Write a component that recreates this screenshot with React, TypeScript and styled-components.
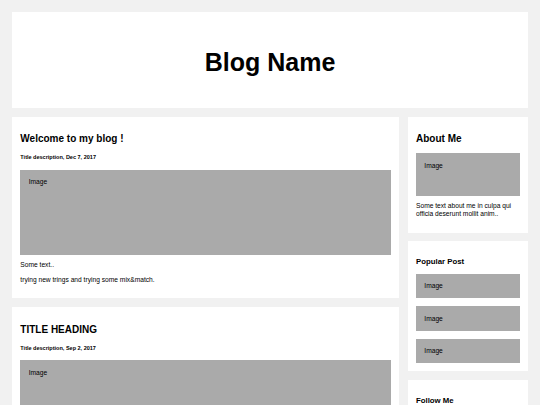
import React from "react";
import styled, { createGlobalStyle } from "styled-components";

const GlobalStyle = createGlobalStyle`
  * { box-sizing: border-box; }
  html, body { margin: 0; overflow: hidden; }
  body {
    padding: 12px;
    background: #f1f1f1;
    font-family: "Liberation Sans", Arial, sans-serif;
    font-size: 6.667px;
    color: #000;
  }
`;

const Header = styled.header`
  background: #fff;
  height: 96px;
  padding-top: 36px;
  text-align: center;
`;

const BlogTitle = styled.h1`
  margin: 0;
  font-size: 25px;
  line-height: 28.75px;
  font-weight: bold;
`;

const Row = styled.div`
  display: flex;
  align-items: flex-start;
`;

const LeftColumn = styled.main`
  flex: 0 0 75%;
  width: 75%;
`;

const RightColumn = styled.aside`
  flex: 0 0 25%;
  width: 25%;
  padding-left: 8.67px;
`;

const Card = styled.section`
  background: #fff;
  padding: 8.33px;
  margin-top: 8.67px;
  display: flow-root;
`;

const PostTitle = styled.h2`
  font-size: 10px;
  line-height: 11.5px;
  font-weight: bold;
  margin: 8.5px 0 8.3px;
`;

const PostMeta = styled.h5`
  font-size: 5.53px;
  line-height: 6.36px;
  font-weight: bold;
  margin: 9.24px 0;
`;

const SideTitle = styled.h3`
  font-size: 7.8px;
  line-height: 9px;
  font-weight: bold;
  margin: 7.8px 0;
`;

const FakeImg = styled.div<{ $height?: number }>`
  background: #aaa;
  width: 100%;
  padding: 8.33px;
  line-height: 7.67px;
  ${(p) => (p.$height ? `height: ${p.$height}px;` : "")}
`;

const ImageStack = styled.div`
  display: flex;
  flex-direction: column;
  gap: 8px;
`;

const Text = styled.p`
  margin: 6.67px 0;
  line-height: 7.67px;
`;

type Post = { title: string; meta: string };

const posts: Post[] = [
  { title: "Welcome to my blog !", meta: "Title description, Dec 7, 2017" },
  { title: "TITLE HEADING", meta: "Title description, Sep 2, 2017" },
];

export default function App() {
  return (
    <>
      <GlobalStyle />
      <Header>
        <BlogTitle>Blog Name</BlogTitle>
      </Header>
      <Row>
        <LeftColumn>
          {posts.map((post) => (
            <Card key={post.title}>
              <PostTitle>{post.title}</PostTitle>
              <PostMeta>{post.meta}</PostMeta>
              <FakeImg $height={85}>Image</FakeImg>
              <Text>Some text..</Text>
              <Text>trying new trings and trying some mix&amp;match.</Text>
            </Card>
          ))}
        </LeftColumn>
        <RightColumn>
          <Card>
            <PostTitle>About Me</PostTitle>
            <FakeImg $height={42.3}>Image</FakeImg>
            <Text>Some text about me in culpa qui officia deserunt mollit anim..</Text>
          </Card>
          <Card>
            <SideTitle>Popular Post</SideTitle>
            <ImageStack>
              <FakeImg>Image</FakeImg>
              <FakeImg>Image</FakeImg>
              <FakeImg>Image</FakeImg>
            </ImageStack>
          </Card>
          <Card>
            <SideTitle>Follow Me</SideTitle>
            <Text>Some text..</Text>
          </Card>
        </RightColumn>
      </Row>
    </>
  );
}
